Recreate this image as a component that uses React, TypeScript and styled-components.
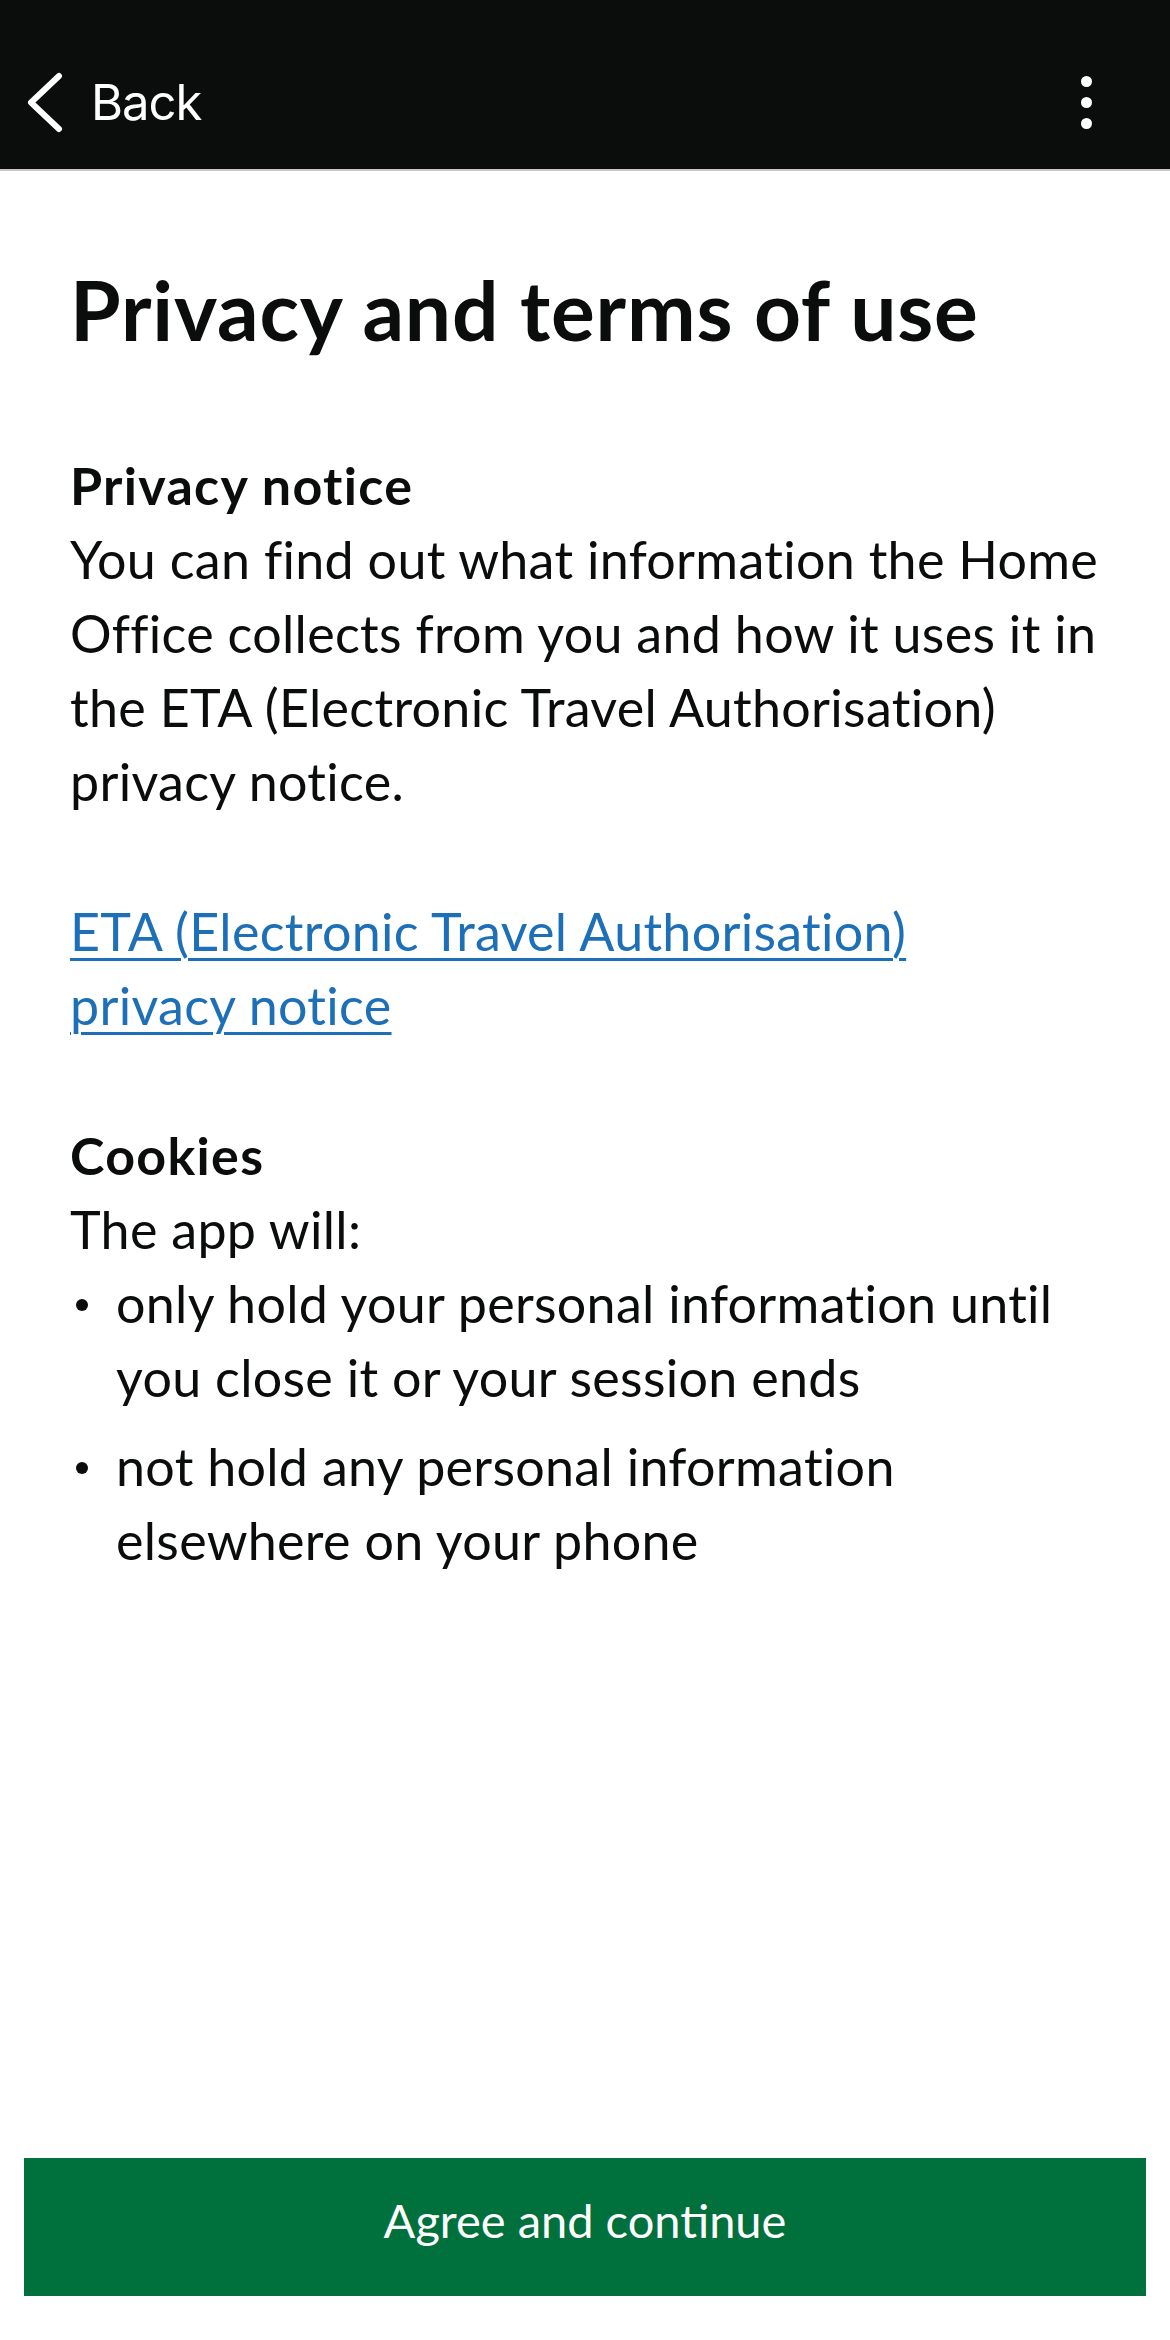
import React from "react";
import styled, { createGlobalStyle } from "styled-components";

const GlobalStyle = createGlobalStyle`
  html, body {
    margin: 0;
    padding: 0;
    background: #ffffff;
  }
  body {
    font-family: Lato, "Liberation Sans", Arial, sans-serif;
    color: #0b0c0c;
  }
  * { box-sizing: border-box; }
`;

const Screen = styled.div`
  width: 1170px;
  min-height: 2340px;
  display: flex;
  flex-direction: column;
  background: #ffffff;
`;

const NavBar = styled.header`
  height: 171px;
  background: #0b0c0c;
  border-bottom: 2px solid #c9c9c9;
  display: flex;
  align-items: center;
  justify-content: space-between;
  padding: 36px 0 0 26px;
`;

const BackButton = styled.button`
  display: flex;
  align-items: center;
  gap: 25px;
  background: none;
  border: none;
  padding: 0;
  color: #ffffff;
  font-family: Inter, Roboto, "Liberation Sans", sans-serif;
  font-size: 49px;
  font-weight: 400;
  letter-spacing: -1px;
  cursor: pointer;
`;

const MenuButton = styled.button`
  width: 60px;
  height: 70px;
  margin-right: 54px;
  background: none;
  border: none;
  padding: 0;
  display: flex;
  flex-direction: column;
  align-items: center;
  justify-content: center;
  gap: 10px;
`;

const MenuDot = styled.span`
  width: 11px;
  height: 11px;
  border-radius: 50%;
  background: #ffffff;
`;

const Main = styled.main`
  flex: 1;
  padding: 93px 60px 0 70px;
`;

const Title = styled.h1`
  margin: 0 0 94px 0;
  font-size: 82px;
  line-height: 90px;
  font-weight: 700;
  letter-spacing: 0.8px;
`;

const Section = styled.section`
  margin-bottom: 76px;
`;

const Heading = styled.h2`
  margin: 0;
  font-size: 52px;
  line-height: 74px;
  font-weight: 700;
  letter-spacing: 1.3px;
`;

const Paragraph = styled.p`
  margin: 0;
  font-size: 52px;
  line-height: 74px;
  font-weight: 400;
  letter-spacing: 0.3px;
`;

const Link = styled.a`
  display: block;
  max-width: 900px;
  font-size: 52px;
  line-height: 74px;
  letter-spacing: 0.3px;
  color: #1d70b8;
  text-decoration: underline;
  text-decoration-thickness: 3px;
  text-underline-offset: 7px;
`;

const List = styled.ul`
  margin: 0;
  padding: 0;
  list-style: none;
`;

const Item = styled.li`
  display: flex;
  align-items: flex-start;
  font-size: 52px;
  line-height: 74px;
  letter-spacing: 0.3px;
  margin-bottom: 15px;
`;

const Bullet = styled.span`
  flex: none;
  width: 12px;
  height: 12px;
  border-radius: 50%;
  background: #0b0c0c;
  margin: 33px 28px 0 6px;
`;

const Footer = styled.footer`
  padding: 0 24px 44px 24px;
`;

const PrimaryButton = styled.button`
  width: 100%;
  height: 138px;
  padding: 0 0 14px 0;
  background: #00703c;
  border: none;
  color: #ffffff;
  font-family: Lato, "Liberation Sans", sans-serif;
  font-size: 47px;
  font-weight: 400;
  cursor: pointer;
`;

function Chevron() {
  return (
    <svg width="40" height="62" viewBox="0 0 40 62" aria-hidden="true">
      <polyline
        points="33,4 5,30.5 33,57"
        fill="none"
        stroke="#ffffff"
        strokeWidth="6"
        strokeLinecap="round"
        strokeLinejoin="round"
      />
    </svg>
  );
}

export default function App() {
  return (
    <>
      <GlobalStyle />
      <Screen>
        <NavBar>
          <BackButton>
            <Chevron />
            <span>Back</span>
          </BackButton>
          <MenuButton aria-label="More options">
            <MenuDot />
            <MenuDot />
            <MenuDot />
          </MenuButton>
        </NavBar>
        <Main>
          <Title>Privacy and terms of use</Title>
          <Section>
            <Heading>Privacy notice</Heading>
            <Paragraph>
              You can find out what information the Home Office collects from
              you and how it uses it in the ETA (Electronic Travel
              Authorisation) privacy notice.
            </Paragraph>
          </Section>
          <Section>
            <Link href="#">
              ETA (Electronic Travel Authorisation) privacy notice
            </Link>
          </Section>
          <Section>
            <Heading>Cookies</Heading>
            <Paragraph>The app will:</Paragraph>
            <List>
              <Item>
                <Bullet />
                <span>
                  only hold your personal information until you close it or
                  your session ends
                </span>
              </Item>
              <Item>
                <Bullet />
                <span>
                  not hold any personal information elsewhere on your phone
                </span>
              </Item>
            </List>
          </Section>
        </Main>
        <Footer>
          <PrimaryButton>Agree and continue</PrimaryButton>
        </Footer>
      </Screen>
    </>
  );
}
